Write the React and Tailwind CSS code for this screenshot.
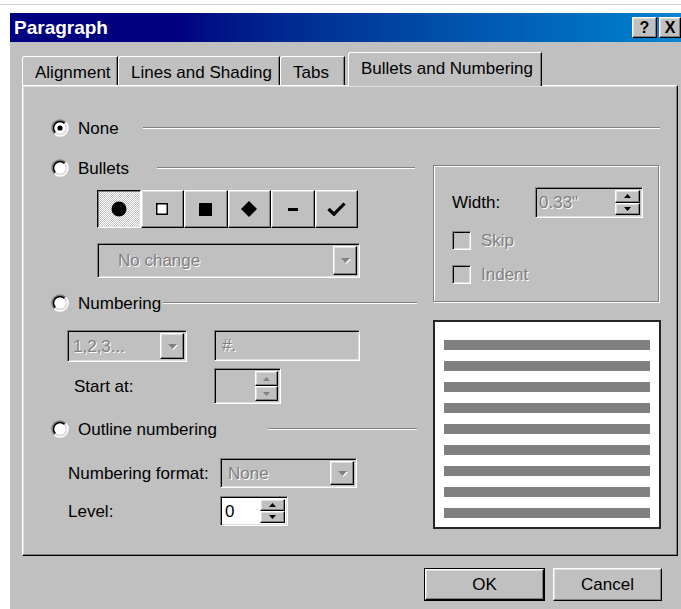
import React from "react";

// Win95-style 3D borders
const raised =
  "border border-t-white border-l-white border-r-black border-b-black shadow-[inset_-1px_-1px_0_#808080,inset_1px_1px_0_#dfdfdf]";
const sunken =
  "border border-t-[#808080] border-l-[#808080] border-r-white border-b-white shadow-[inset_1px_1px_0_#000,inset_-1px_-1px_0_#dfdfdf]";
const pressed =
  "border border-t-black border-l-black border-r-white border-b-white shadow-[inset_1px_1px_0_#808080,inset_-1px_-1px_0_#dfdfdf]";
const dim = "text-[#808080] [text-shadow:1px_1px_0_#fff]";

function Radio({ checked }) {
  return (
    <svg width="18" height="18" viewBox="0 0 18 18" className="shrink-0">
      <circle cx="9" cy="9" r="6" fill="#fff" />
      <path d="M3.34 14.66A8 8 0 0 1 14.66 3.34" stroke="#808080" strokeWidth="1.5" fill="none" />
      <path d="M14.66 3.34A8 8 0 0 1 3.34 14.66" stroke="#fff" strokeWidth="1.5" fill="none" />
      <path d="M4.4 13.6A6.5 6.5 0 0 1 13.6 4.4" stroke="#000" strokeWidth="1.5" fill="none" />
      <path d="M13.6 4.4A6.5 6.5 0 0 1 4.4 13.6" stroke="#dfdfdf" strokeWidth="1.5" fill="none" />
      {checked && <circle cx="9" cy="9" r="2.6" fill="#000" />}
    </svg>
  );
}

function Etch({ className }) {
  return <div className={`h-[2px] border-t border-t-[#808080] border-b border-b-white ${className}`} />;
}

function OptionRow({ label, checked, blockClass, lineClass }) {
  return (
    <div className="flex items-center h-[20px]">
      <div className={`flex items-center gap-[9px] shrink-0 ${blockClass}`}>
        <Radio checked={checked} />
        <span className="whitespace-nowrap">{label}</span>
      </div>
      <Etch className={lineClass} />
    </div>
  );
}

function Tri({ up, disabled }) {
  const fill = disabled ? "#808080" : "#000";
  return (
    <svg width="7" height="4" viewBox="0 0 7 4">
      {up ? <path d="M3.5 0L7 4H0z" fill={fill} /> : <path d="M0 0h7L3.5 4z" fill={fill} />}
    </svg>
  );
}

function DropButton() {
  return (
    <div className={`${raised} w-[24px] h-full flex items-center justify-center bg-[#c0c0c0]`}>
      <svg width="11" height="7" viewBox="0 0 11 7">
        <path d="M1 1h9L5.5 6z" fill="#fff" transform="translate(1 1)" />
        <path d="M0 0h9L4.5 5z" fill="#808080" transform="translate(1 1)" />
      </svg>
    </div>
  );
}

function Combo({ text, className, textClass }) {
  return (
    <div className={`${sunken} flex items-stretch p-[2px] ${className}`}>
      <div className={`flex-1 flex items-center ${dim} ${textClass}`}>{text}</div>
      <DropButton />
    </div>
  );
}

function SpinButtons({ disabled, className }) {
  return (
    <div className={`flex flex-col ${className}`}>
      <div className={`${raised} flex-1 flex items-center justify-center bg-[#c0c0c0]`}>
        <Tri up disabled={disabled} />
      </div>
      <div className={`${raised} flex-1 flex items-center justify-center bg-[#c0c0c0]`}>
        <Tri disabled={disabled} />
      </div>
    </div>
  );
}

function Checkbox({ label }) {
  return (
    <div className="flex items-center h-[19px]">
      <div className={`${sunken} w-[19px] h-[19px] bg-[#c0c0c0]`} />
      <span className={`ml-[10px] ${dim}`}>{label}</span>
    </div>
  );
}

function BulletGlyph({ kind }) {
  if (kind === "dot")
    return (
      <svg width="16" height="16" viewBox="0 0 16 16">
        <circle cx="8" cy="8" r="7.5" fill="#000" />
      </svg>
    );
  if (kind === "hollow")
    return (
      <svg width="12" height="12" viewBox="0 0 12 12">
        <rect x="0.75" y="0.75" width="10.5" height="10.5" fill="#fff" stroke="#000" strokeWidth="1.5" />
      </svg>
    );
  if (kind === "square")
    return (
      <svg width="13" height="13" viewBox="0 0 13 13">
        <rect width="13" height="13" fill="#000" />
      </svg>
    );
  if (kind === "diamond")
    return (
      <svg width="16" height="16" viewBox="0 0 16 16">
        <path d="M8 0L16 8L8 16L0 8z" fill="#000" />
      </svg>
    );
  if (kind === "dash")
    return (
      <svg width="10" height="3" viewBox="0 0 10 3">
        <rect width="10" height="3" fill="#000" />
      </svg>
    );
  return (
    <svg width="19" height="14" viewBox="0 0 19 14">
      <path d="M1.5 7L7 12.2L17.5 1.5" stroke="#000" strokeWidth="3.2" fill="none" />
    </svg>
  );
}

const bullets = ["dot", "hollow", "square", "diamond", "dash", "check"];

function Tab({ label, className, selected }) {
  return (
    <div
      className={`flex items-center pl-[12px] border-t border-l border-t-white border-l-white rounded-tl-[3px] border-r border-r-black shadow-[inset_-1px_0_0_#808080] whitespace-nowrap ${
        selected ? "relative z-10 -mb-px h-[34px] bg-[#c0c0c0] pb-[2px]" : "h-[29px] pt-[2px]"
      } ${className}`}
    >
      {label}
    </div>
  );
}

export default function App() {
  return (
    <div className="w-[681px] h-[609px] bg-white overflow-hidden font-['Liberation_Sans',Arial,sans-serif] text-[17px] text-black leading-none">
      <div className="h-[4px]" />
      <div className="h-px bg-[#cfcfcf]" />
      <div className="h-[8px]" />

      <div className="ml-[10px] w-[671px] h-[596px] bg-[#c0c0c0] overflow-hidden">
        {/* title bar */}
        <div className="h-[29px] flex items-center bg-linear-to-r from-[#000080] from-25% to-[#1084d0] pl-[4px]">
          <span className="text-white font-bold text-[19px]">Paragraph</span>
          <div className="ml-auto flex gap-[2px]">
            <div className={`${raised} bg-[#c0c0c0] w-[25px] h-[21px] flex items-center justify-center font-bold text-[16px]`}>?</div>
            <div className={`${raised} bg-[#c0c0c0] w-[22px] h-[21px] flex items-center justify-center font-bold text-[16px]`}>X</div>
          </div>
        </div>

        {/* tab strip */}
        <div className="h-[43px] flex items-end pl-[12px]">
          <Tab label="Alignment" className="w-[96px]" />
          <Tab label="Lines and Shading" className="w-[162px]" />
          <Tab label="Tabs" className="w-[65px]" />
          <Tab label="Bullets and Numbering" className="ml-[3px] w-[194px] pl-[11px]" selected />
        </div>

        {/* tab page */}
        <div className="ml-[12px] w-[656px] h-[471px] border border-t-white border-l-white border-r-black border-b-black shadow-[inset_-1px_-1px_0_#808080,inset_1px_1px_0_#dfdfdf] pl-[28px] pt-[32px]">
          <OptionRow label="None" checked blockClass="w-[92px]" lineClass="w-[517px]" />

          <div className="flex mt-[20px]">
            {/* left column */}
            <div className="w-[366px]">
              <OptionRow label="Bullets" blockClass="w-[106px]" lineClass="w-[258px]" />

              <div className="ml-[46px] mt-[12px] flex w-[261px] h-[38px]">
                {bullets.map((b, i) => (
                  <div
                    key={b}
                    className={`flex-1 flex items-center justify-center ${
                      i === 0
                        ? `${pressed} bg-[repeating-conic-gradient(#fff_0_25%,#c0c0c0_0_50%)] bg-[length:2px_2px]`
                        : `${raised} bg-[#c0c0c0]`
                    }`}
                  >
                    <BulletGlyph kind={b} />
                  </div>
                ))}
              </div>

              <Combo text="No change" className="ml-[46px] mt-[15px] w-[263px] h-[35px]" textClass="pl-[18px]" />

              <div className="mt-[15px]">
                <OptionRow label="Numbering" blockClass="w-[112px]" lineClass="w-[254px]" />
              </div>

              <div className="mt-[17px] ml-[16px] flex items-start">
                <Combo text="1,2,3..." className="w-[120px] h-[32px]" textClass="pl-[3px]" />
                <div className={`${sunken} ml-[27px] w-[146px] h-[31px] flex items-center pl-[7px] ${dim}`}>#.</div>
              </div>

              <div className="mt-[6px] flex items-center">
                <span className="ml-[23px] w-[140px]">Start at:</span>
                <div className={`${sunken} w-[67px] h-[36px] flex justify-end p-[2px]`}>
                  <SpinButtons disabled className="w-[23px]" />
                </div>
              </div>

              <div className="mt-[15px]">
                <OptionRow label="Outline numbering" blockClass="w-[217px]" lineClass="w-[149px]" />
              </div>

              <div className="mt-[19px] flex items-center">
                <span className="ml-[17px] w-[152px] whitespace-nowrap">Numbering format:</span>
                <Combo text="None" className="w-[137px] h-[30px]" textClass="pl-[5px]" />
              </div>

              <div className="mt-[8px] flex items-center">
                <span className="ml-[17px] w-[152px]">Level:</span>
                <div className={`${sunken} w-[68px] h-[30px] flex items-stretch p-[2px] bg-white`}>
                  <span className="flex-1 flex items-center pl-[2px]">0</span>
                  <SpinButtons className="w-[25px]" />
                </div>
              </div>
            </div>

            {/* right column */}
            <div className="ml-[15px] w-[229px]">
              <div className="mt-[7px] ml-px w-[226px] h-[137px] border border-[#808080] shadow-[1px_1px_0_#fff,inset_1px_1px_0_#fff] pl-[18px] pt-[21px]">
                <div className="flex items-center h-[31px]">
                  <span className="w-[83px]">Width:</span>
                  <div className={`${sunken} w-[108px] h-[31px] flex items-stretch p-[2px]`}>
                    <span className={`flex-1 flex items-center pl-[1px] ${dim}`}>0.33"</span>
                    <SpinButtons className="w-[25px]" />
                  </div>
                </div>
                <div className="mt-[13px]">
                  <Checkbox label="Skip" />
                </div>
                <div className="mt-[15px]">
                  <Checkbox label="Indent" />
                </div>
              </div>

              <div className="mt-[18px] ml-px w-[228px] h-[209px] border-2 border-[#262626] bg-white pl-[9px] pt-[18px] flex flex-col gap-[11px]">
                {[0, 1, 2, 3, 4, 5, 6, 7, 8].map((n) => (
                  <div key={n} className="w-[206px] h-[10px] bg-[#808080]" />
                ))}
              </div>
            </div>
          </div>
        </div>

        {/* dialog buttons */}
        <div className="mt-[12px] flex justify-end gap-[8px] pr-[19px]">
          <div className="w-[121px] h-[33px] border border-black">
            <div className={`${raised} w-full h-full flex items-center justify-center`}>OK</div>
          </div>
          <div className={`${raised} w-[109px] h-[33px] flex items-center justify-center`}>Cancel</div>
        </div>
      </div>
    </div>
  );
}
